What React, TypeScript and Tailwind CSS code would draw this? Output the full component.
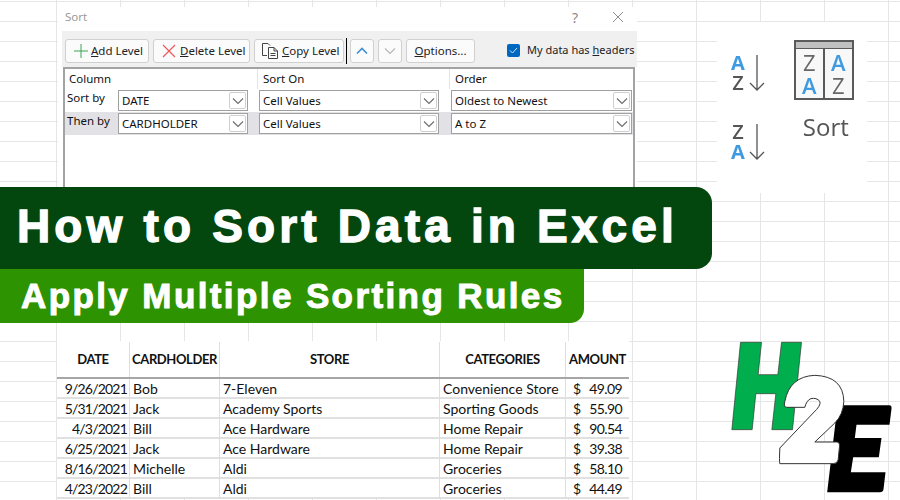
import React from "react";

const uiFont = "font-['Noto_Sans',sans-serif]";
const sheetFont = "font-['Lato',sans-serif]";

const rows = [
  ["9/26/2021", "Bob", "7-Eleven", "Convenience Store", "49.09"],
  ["5/31/2021", "Jack", "Academy Sports", "Sporting Goods", "55.90"],
  ["4/3/2021", "Bill", "Ace Hardware", "Home Repair", "90.54"],
  ["6/25/2021", "Jack", "Ace Hardware", "Home Repair", "39.38"],
  ["8/16/2021", "Michelle", "Aldi", "Groceries", "58.10"],
  ["4/23/2022", "Bill", "Aldi", "Groceries", "44.49"],
];

const Chevron = ({ up = false, color = "#6b6b6b" }: { up?: boolean; color?: string }) => (
  <svg width="12" height="8" viewBox="0 0 12 8" fill="none">
    <path d={up ? "M1 6.5 L6 1.5 L11 6.5" : "M1 1.5 L6 6.5 L11 1.5"} stroke={color} strokeWidth={up ? 1.6 : 1.1} />
  </svg>
);

const ToolButton = ({ className, children }: { className: string; children: React.ReactNode }) => (
  <div className={`flex h-[24px] shrink-0 items-center whitespace-nowrap rounded-[3px] border border-[#d0d0d0] bg-[#fbfbfb] ${className}`}>
    {children}
  </div>
);

const Field = ({ text, className }: { text: string; className: string }) => (
  <div className={`flex h-[21px] shrink-0 items-center justify-between border border-[#a0a0a0] bg-white pl-[3px] pr-[1px] text-[11.5px] text-[#111] ${className}`}>
    <span>{text}</span>
    <div className="flex h-[17px] w-[17px] items-center justify-center rounded-[2px] border border-[#cfcfcf]">
      <Chevron />
    </div>
  </div>
);

const SortDialog = () => (
  <div className={`ml-[58px] flex h-[180px] w-[579px] flex-col bg-white ${uiFont}`}>
    <div className="flex h-[24px] shrink-0 items-center pb-[4px] pl-[7px] text-[11.5px] text-[#9a9a9a]">
      <span className="w-[24px]">Sort</span>
      <span className="ml-[483px] w-[8px] text-[14px] text-[#8a8a8a]">?</span>
      <svg className="ml-[32px]" width="12" height="12" viewBox="0 0 12 12" fill="none">
        <path d="M1 1 L11 11 M11 1 L1 11" stroke="#8f8f8f" strokeWidth="1" />
      </svg>
    </div>
    <div className="ml-[4px] flex h-[36px] shrink-0 items-start bg-[#f0f0f0] pl-[3px] pt-[8px] text-[11.5px] text-[#222]">
      <ToolButton className="w-[84px] pl-[7px]">
        <svg width="16" height="16" viewBox="0 0 16 16" fill="none">
          <path d="M8 1 V15 M1 8 H15" stroke="#3aa655" strokeWidth="1" />
        </svg>
        <span className="ml-[2px]"><u>A</u>dd Level</span>
      </ToolButton>
      <ToolButton className="ml-[4px] w-[97px] pl-[8px]">
        <svg width="14" height="14" viewBox="0 0 14 14" fill="none">
          <path d="M1 1 L13 13 M13 1 L1 13" stroke="#ea5a5a" strokeWidth="1.2" />
        </svg>
        <span className="ml-[4px]"><u>D</u>elete Level</span>
      </ToolButton>
      <ToolButton className="ml-[4px] w-[90px] pl-[7px]">
        <svg width="17" height="16" viewBox="0 0 17 16" fill="none" stroke="#444" strokeWidth="1">
          <path d="M5 12.5 H0.5 V0.5 H6 L8 2.5" />
          <path d="M6.5 4.5 H12 L15.5 8 V15.5 H6.5 Z M12 4.5 V8 H15.5 M8.5 10.5 H13.5 M8.5 12.5 H13.5" />
        </svg>
        <span className="ml-[3px]"><u>C</u>opy Level</span>
      </ToolButton>
      <div className="ml-[2px] mt-[-1px] h-[26px] w-[1px] shrink-0 bg-black" />
      <ToolButton className="ml-[3px] w-[24px] justify-center">
        <Chevron up color="#3f8fd6" />
      </ToolButton>
      <ToolButton className="ml-[4px] w-[24px] justify-center">
        <Chevron color="#b5b5b5" />
      </ToolButton>
      <ToolButton className="ml-[4px] w-[69px] justify-center">
        <span><u>O</u>ptions...</span>
      </ToolButton>
      <div className="ml-[32px] mt-[5px] flex h-[13px] w-[13px] shrink-0 items-center justify-center rounded-[2px] bg-[#0067c0]">
        <svg width="9" height="7" viewBox="0 0 9 7" fill="none">
          <path d="M1 3.5 L3.5 6 L8 1" stroke="#cfe4f7" strokeWidth="1" />
        </svg>
      </div>
      <span className="ml-[7px] mt-[3px] whitespace-nowrap text-[11px]">My data has <u>h</u>eaders</span>
    </div>
    <div className="ml-[5px] flex h-[120px] w-[572px] flex-col border-x-2 border-t-2 border-[#a3a3a3] text-[11.5px] text-[#111]">
      <div className="flex h-[20px] shrink-0 items-center">
        <span className="ml-[4px] w-[188px]">Column</span>
        <div className="h-[20px] w-[1px] bg-[#e4e4e4]" />
        <span className="ml-[5px] w-[186px]">Sort On</span>
        <div className="h-[20px] w-[1px] bg-[#e4e4e4]" />
        <span className="ml-[5px]">Order</span>
      </div>
      <div className="flex h-[23px] shrink-0 items-center">
        <span className="ml-[2px] mt-[-5px] w-[51px] shrink-0">Sort by</span>
        <Field text="DATE" className="w-[130px]" />
        <Field text="Cell Values" className="ml-[11px] w-[180px]" />
        <Field text="Oldest to Newest" className="ml-[12px] w-[181px]" />
      </div>
      <div className="flex h-[23px] w-[568px] shrink-0 items-center bg-[#e1e1e6]">
        <span className="ml-[2px] mt-[-5px] w-[51px] shrink-0">Then by</span>
        <Field text="CARDHOLDER" className="w-[130px]" />
        <Field text="Cell Values" className="ml-[11px] w-[180px]" />
        <Field text="A to Z" className="ml-[12px] w-[181px]" />
      </div>
    </div>
  </div>
);

const Banners = () => (
  <div className="flex flex-col font-['Liberation_Sans',sans-serif] font-bold text-white">
    <div className="flex h-[82px] w-[712px] items-center rounded-r-[16px] bg-[#03470f] pb-[5px] pl-[17px] text-[46px] leading-none tracking-[4.15px] [-webkit-text-stroke:1.3px_white]">
      How to Sort Data in Excel
    </div>
    <div className="flex h-[54px] w-[584px] items-center rounded-br-[14px] bg-[#2d9300] pb-[2px] pl-[21px] text-[35px] leading-none tracking-[2.4px] [-webkit-text-stroke:1px_white]">
      Apply Multiple Sorting Rules
    </div>
  </div>
);

const ExpenseTable = () => (
  <div className={`ml-[57px] mt-[18px] w-[572px] bg-white text-[14px] text-[#111] ${sheetFont}`}>
    <div className="grid h-[38px] grid-cols-[73px_90px_220px_126px_63px] border-b-2 border-[#a6a6a6] pt-[1px] text-[13px] font-bold tracking-[-0.4px]">
      <div className="flex items-center justify-center border-r border-[#dedede]">DATE</div>
      <div className="flex items-center justify-center border-r border-[#dedede]">CARDHOLDER</div>
      <div className="flex items-center justify-center border-r border-[#dedede]">STORE</div>
      <div className="flex items-center justify-center border-r border-[#dedede]">CATEGORIES</div>
      <div className="flex items-center justify-center">AMOUNT</div>
    </div>
    {rows.map((row, i) => (
      <div key={i} className="grid h-[20px] grid-cols-[73px_90px_220px_126px_63px] border-b-2 border-[#e0e0e0] leading-[20px]">
        <div className="border-r border-[#dedede] pr-[2px] text-right tracking-[-0.8px]">{row[0]}</div>
        <div className="border-r border-[#dedede] pl-[3px]">{row[1]}</div>
        <div className="border-r border-[#dedede] pl-[3px]">{row[2]}</div>
        <div className="border-r border-[#dedede] pl-[3px]">{row[3]}</div>
        <div className="flex justify-between pl-[7px] pr-[7px] tracking-[-0.6px]">
          <span>$</span>
          <span>{row[4]}</span>
        </div>
      </div>
    ))}
  </div>
);

const Letters = ({ first, second }: { first: string; second: string }) => (
  <div className="flex flex-col items-center text-[20px] font-bold leading-[20px]">
    <span className={first === "A" ? "text-[#3f9ae0]" : "font-semibold text-[#555]"}>{first}</span>
    <span className={second === "A" ? "text-[#3f9ae0]" : "font-semibold text-[#555]"}>{second}</span>
  </div>
);

const AzButton = ({ first, second }: { first: string; second: string }) => (
  <div className="flex h-[40px] items-center">
    <Letters first={first} second={second} />
    <svg className="ml-[4px]" width="16" height="36" viewBox="0 0 16 36" fill="none">
      <path d="M8 0 V35 M1 28 L8 35 L15 28" stroke="#555" strokeWidth="1.3" />
    </svg>
  </div>
);

const SortRibbon = () => (
  <div className="ml-[5px] mt-[22px] flex h-[171px] w-[150px] bg-white font-['Open_Sans',sans-serif] blur-[0.4px]">
    <div className="ml-[14px] mt-[31px] flex flex-col gap-[29px]">
      <AzButton first="A" second="Z" />
      <AzButton first="Z" second="A" />
    </div>
    <div className="ml-[29px] mt-[18px] flex flex-col items-center">
      <div className="flex h-[60px] w-[60px] flex-col border-2 border-[#5a5a5a] bg-[#f8f8f8]">
        <div className="h-[7px] border-b border-[#5a5a5a] bg-[#c0c0c0]" />
        <div className="flex flex-1 text-[22px] leading-[23px]">
          <div className="flex flex-1 flex-col items-center border-r-2 border-[#5a5a5a] pt-[2px]">
            <span className="text-[#666]">Z</span>
            <span className="font-semibold text-[#3f9ae0]">A</span>
          </div>
          <div className="flex flex-1 flex-col items-center pt-[2px]">
            <span className="font-semibold text-[#3f9ae0]">A</span>
            <span className="text-[#666]">Z</span>
          </div>
        </div>
      </div>
      <span className="ml-[4px] mt-[11px] text-[24px] leading-[32px] text-[#555]">Sort</span>
    </div>
  </div>
);

const H2ELogo = () => (
  <svg className="ml-[16px] mt-[145px] block" width="167" height="160" viewBox="50 20 500 480">
    <path
      d="M378 222 L533 222 Q541 222 540 232 L534 280 L435 280 L430 320 L510 320 L502 378 L425 378 L418 423 L522 423 L516 474 Q515 483 505 483 L347 483 Z"
      fill="#000"
    />
    <path
      d="M87 33 L150 33 L140 130 L199 130 L210 33 L270 33 L243 295 L181 295 L193 187 L133 187 L122 295 L61 295 Z"
      fill="#00ae4d"
      stroke="#333"
      strokeWidth="2"
    />
    <path
      d="M205 397 Q203 390 205 350 L305 245 Q330 222 325 210 Q315 198 298 202 Q285 207 280 228 L226 228 Q215 228 220 210 Q235 135 310 132 Q395 135 397 210 Q395 250 370 275 L310 332 L375 332 Q385 332 384 345 L380 385 Q378 397 365 397 Z"
      fill="#fff"
      stroke="#333"
      strokeWidth="3"
    />
  </svg>
);

export default function App() {
  return (
    <div className="flex h-[500px] w-[900px] overflow-hidden bg-white bg-[linear-gradient(to_right,#e6e6e6_1px,transparent_1px),linear-gradient(#e6e6e6_1px,transparent_1px)] bg-size-[64px_20px] bg-position-[56px_1px]">
      <div className="w-[712px] shrink-0 pt-[7px]">
        <SortDialog />
        <Banners />
        <ExpenseTable />
      </div>
      <div className="flex flex-col">
        <SortRibbon />
        <H2ELogo />
      </div>
    </div>
  );
}
